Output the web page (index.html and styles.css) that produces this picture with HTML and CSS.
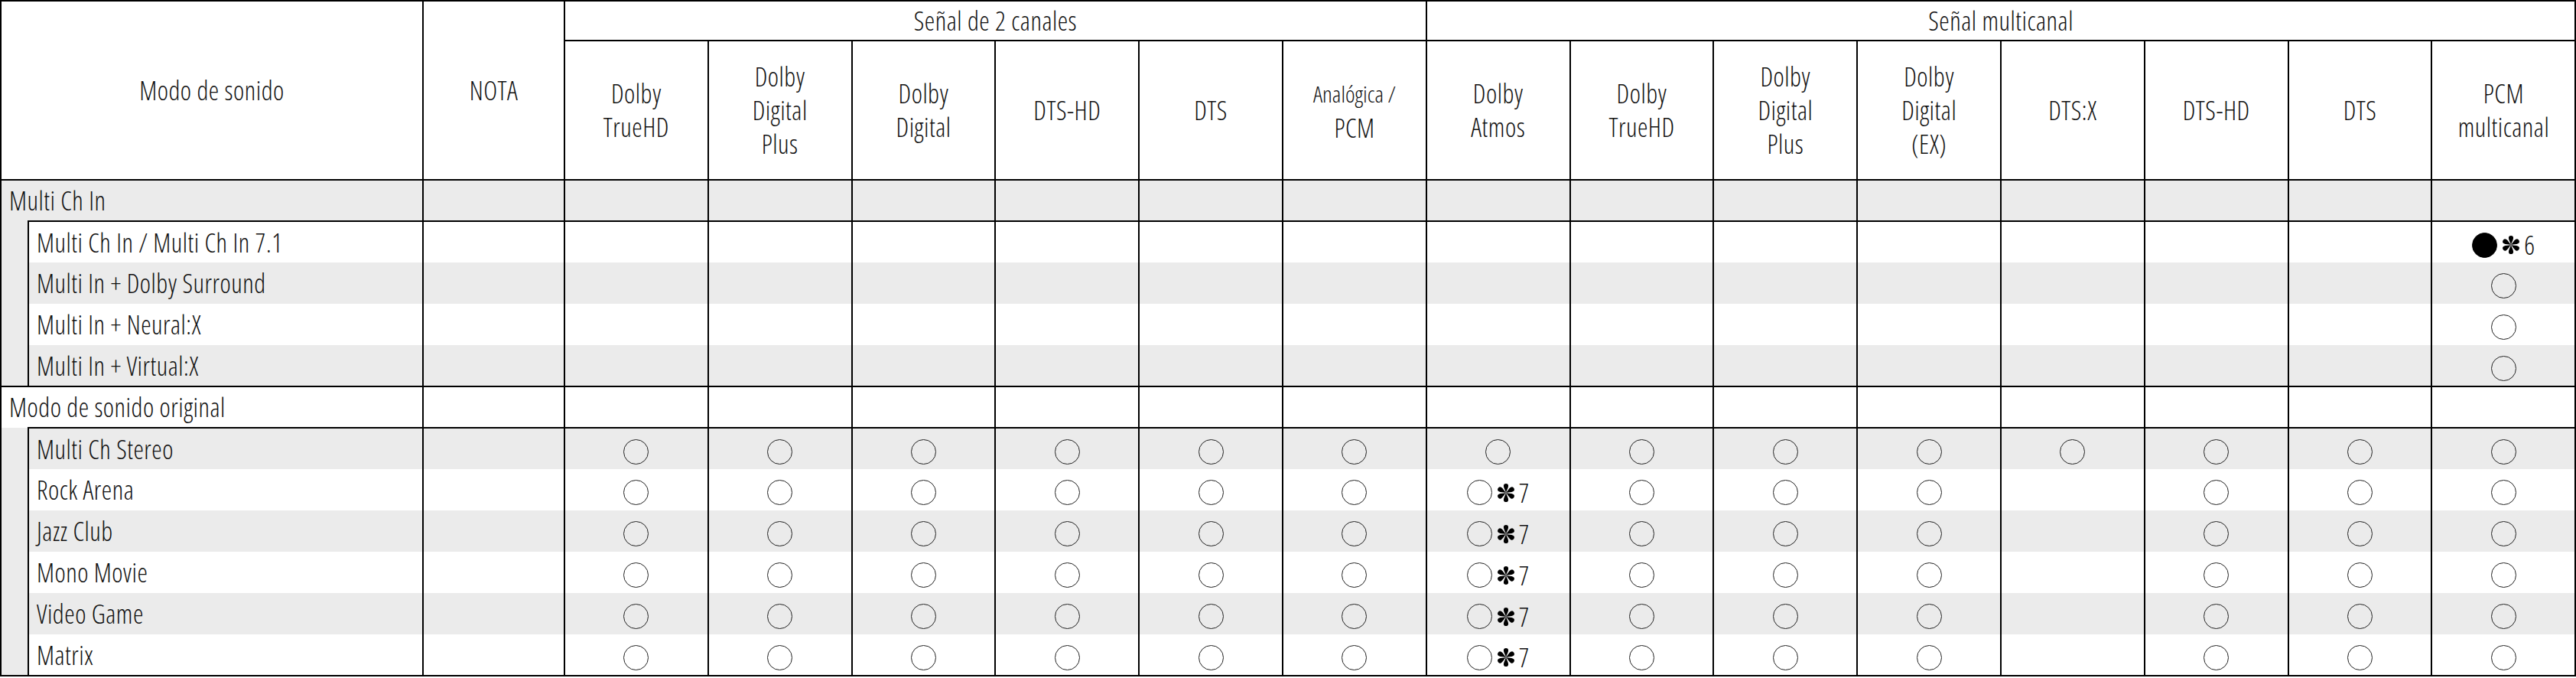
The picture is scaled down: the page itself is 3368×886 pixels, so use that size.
FILE: index.html
```html
<!DOCTYPE html>
<html lang="es">
<head>
<meta charset="utf-8">
<title>Modo de sonido</title>
<link rel="stylesheet" href="styles.css">
</head>
<body>
<svg class="defs" width="0" height="0" aria-hidden="true">
  <symbol id="ast" viewBox="-12 -12 24 24">
    <g fill="#000">
      <path id="spoke" d="M0 0 C-0.8 -3 -3.1 -6.4 -3.1 -8.9 A3.1 3.1 0 0 1 3.1 -8.9 C3.1 -6.4 0.8 -3 0 0Z"/>
      <use href="#spoke" transform="rotate(60)"/>
      <use href="#spoke" transform="rotate(120)"/>
      <use href="#spoke" transform="rotate(180)"/>
      <use href="#spoke" transform="rotate(240)"/>
      <use href="#spoke" transform="rotate(300)"/>
    </g>
  </symbol>
</svg>
<table class="modes">
  <colgroup>
    <col class="c-gutter"><col class="c-label"><col class="c-nota">
    <col class="c-sig"><col class="c-sig"><col class="c-sig"><col class="c-sig"><col class="c-sig"><col class="c-sig"><col class="c-sig">
    <col class="c-sig"><col class="c-sig"><col class="c-sig"><col class="c-sig"><col class="c-sig"><col class="c-sig"><col class="c-sig">
  </colgroup>
  <thead>
    <tr class="h1">
      <th colspan="2" rowspan="2">Modo de sonido</th>
      <th rowspan="2">NOTA</th>
      <th colspan="6">Señal de 2 canales</th>
      <th colspan="8">Señal multicanal</th>
    </tr>
    <tr class="h2">
      <th>Dolby<br>TrueHD</th>
      <th>Dolby<br>Digital<br>Plus</th>
      <th>Dolby<br>Digital</th>
      <th>DTS-HD</th>
      <th>DTS</th>
      <th><span class="squeeze">Analógica /</span><br>PCM</th>
      <th>Dolby<br>Atmos</th>
      <th>Dolby<br>TrueHD</th>
      <th>Dolby<br>Digital<br>Plus</th>
      <th>Dolby<br>Digital<br>(EX)</th>
      <th>DTS:X</th>
      <th>DTS-HD</th>
      <th>DTS</th>
      <th>PCM<br>multicanal</th>
    </tr>
  </thead>
  <tbody class="grp grp-grey">
    <tr class="group grey">
      <td colspan="2" class="glabel">Multi Ch In</td>
      <td></td><td></td><td></td><td></td><td></td><td></td><td></td><td></td><td></td><td></td><td></td><td></td><td></td><td></td><td></td>
    </tr>
    <tr class="sub first">
      <td class="gutter" rowspan="4"></td>
      <td class="slabel">Multi Ch In / Multi Ch In 7.1</td>
      <td></td><td></td><td></td><td></td><td></td><td></td><td></td><td></td><td></td><td></td><td></td><td></td><td></td><td></td>
      <td><span class="mark"><span class="dot"></span><svg class="star"><use href="#ast"/></svg><span class="num">6</span></span></td>
    </tr>
    <tr class="sub grey">
      <td class="slabel">Multi In + Dolby Surround</td>
      <td></td><td></td><td></td><td></td><td></td><td></td><td></td><td></td><td></td><td></td><td></td><td></td><td></td><td></td>
      <td><span class="ring"></span></td>
    </tr>
    <tr class="sub">
      <td class="slabel">Multi In + Neural:X</td>
      <td></td><td></td><td></td><td></td><td></td><td></td><td></td><td></td><td></td><td></td><td></td><td></td><td></td><td></td>
      <td><span class="ring"></span></td>
    </tr>
    <tr class="sub grey">
      <td class="slabel">Multi In + Virtual:X</td>
      <td></td><td></td><td></td><td></td><td></td><td></td><td></td><td></td><td></td><td></td><td></td><td></td><td></td><td></td>
      <td><span class="ring"></span></td>
    </tr>
  </tbody>
  <tbody class="grp">
    <tr class="group">
      <td colspan="2" class="glabel">Modo de sonido original</td>
      <td></td><td></td><td></td><td></td><td></td><td></td><td></td><td></td><td></td><td></td><td></td><td></td><td></td><td></td><td></td>
    </tr>
    <tr class="sub first grey">
      <td class="gutter" rowspan="6"></td>
      <td class="slabel">Multi Ch Stereo</td>
      <td></td>
      <td><span class="ring"></span></td><td><span class="ring"></span></td><td><span class="ring"></span></td><td><span class="ring"></span></td><td><span class="ring"></span></td><td><span class="ring"></span></td>
      <td><span class="ring"></span></td><td><span class="ring"></span></td><td><span class="ring"></span></td><td><span class="ring"></span></td><td><span class="ring"></span></td><td><span class="ring"></span></td><td><span class="ring"></span></td><td><span class="ring"></span></td>
    </tr>
    <tr class="sub">
      <td class="slabel">Rock Arena</td>
      <td></td>
      <td><span class="ring"></span></td><td><span class="ring"></span></td><td><span class="ring"></span></td><td><span class="ring"></span></td><td><span class="ring"></span></td><td><span class="ring"></span></td>
      <td><span class="mark"><span class="ring"></span><svg class="star"><use href="#ast"/></svg><span class="num">7</span></span></td>
      <td><span class="ring"></span></td><td><span class="ring"></span></td><td><span class="ring"></span></td><td></td><td><span class="ring"></span></td><td><span class="ring"></span></td><td><span class="ring"></span></td>
    </tr>
    <tr class="sub grey">
      <td class="slabel">Jazz Club</td>
      <td></td>
      <td><span class="ring"></span></td><td><span class="ring"></span></td><td><span class="ring"></span></td><td><span class="ring"></span></td><td><span class="ring"></span></td><td><span class="ring"></span></td>
      <td><span class="mark"><span class="ring"></span><svg class="star"><use href="#ast"/></svg><span class="num">7</span></span></td>
      <td><span class="ring"></span></td><td><span class="ring"></span></td><td><span class="ring"></span></td><td></td><td><span class="ring"></span></td><td><span class="ring"></span></td><td><span class="ring"></span></td>
    </tr>
    <tr class="sub">
      <td class="slabel">Mono Movie</td>
      <td></td>
      <td><span class="ring"></span></td><td><span class="ring"></span></td><td><span class="ring"></span></td><td><span class="ring"></span></td><td><span class="ring"></span></td><td><span class="ring"></span></td>
      <td><span class="mark"><span class="ring"></span><svg class="star"><use href="#ast"/></svg><span class="num">7</span></span></td>
      <td><span class="ring"></span></td><td><span class="ring"></span></td><td><span class="ring"></span></td><td></td><td><span class="ring"></span></td><td><span class="ring"></span></td><td><span class="ring"></span></td>
    </tr>
    <tr class="sub grey">
      <td class="slabel">Video Game</td>
      <td></td>
      <td><span class="ring"></span></td><td><span class="ring"></span></td><td><span class="ring"></span></td><td><span class="ring"></span></td><td><span class="ring"></span></td><td><span class="ring"></span></td>
      <td><span class="mark"><span class="ring"></span><svg class="star"><use href="#ast"/></svg><span class="num">7</span></span></td>
      <td><span class="ring"></span></td><td><span class="ring"></span></td><td><span class="ring"></span></td><td></td><td><span class="ring"></span></td><td><span class="ring"></span></td><td><span class="ring"></span></td>
    </tr>
    <tr class="sub last">
      <td class="slabel">Matrix</td>
      <td></td>
      <td><span class="ring"></span></td><td><span class="ring"></span></td><td><span class="ring"></span></td><td><span class="ring"></span></td><td><span class="ring"></span></td><td><span class="ring"></span></td>
      <td><span class="mark"><span class="ring"></span><svg class="star"><use href="#ast"/></svg><span class="num">7</span></span></td>
      <td><span class="ring"></span></td><td><span class="ring"></span></td><td><span class="ring"></span></td><td></td><td><span class="ring"></span></td><td><span class="ring"></span></td><td><span class="ring"></span></td>
    </tr>
  </tbody>
</table>
</body>
</html>
```

FILE: styles.css
```css
html, body {
  margin: 0;
  padding: 0;
  background: #fff;
}

body {
  font-family: "Open Sans", "Liberation Sans", sans-serif;
  font-stretch: 75%;
  font-weight: 350;
  color: #111;
}

.defs {
  position: absolute;
  width: 0;
  height: 0;
  overflow: hidden;
}

.modes {
  border-collapse: collapse;
  table-layout: fixed;
  width: 3367px;
  font-size: 34px;
  letter-spacing: 0.5px;
}

.c-gutter { width: 36px; }
.c-label { width: 516px; }
.c-nota { width: 185px; }
.c-sig { width: 187.8px; }

.modes th,
.modes td {
  border-left: 2px solid #000;
  border-right: 2px solid #000;
  border-top: none;
  border-bottom: none;
  padding: 0;
  text-align: center;
  vertical-align: middle;
  font-weight: 350;
  white-space: nowrap;
}

.modes thead th {
  border: 2px solid #000;
  line-height: 44px;
}

.h1 th { height: 50px; }
.h2 th { height: 180px; }

.squeeze {
  font-size: 30px;
  letter-spacing: 0;
}

.modes tbody tr { height: 54px; }

.modes tr.grey td { background: #ebebeb; }
.grp-grey .gutter { background: #ebebeb; }

.modes tr.group td { border-top: 2px solid #000; }
.modes tr.first td { border-top: 2px solid #000; }
.modes tr.first td.gutter { border-top: none; }
.modes tr.last td,
.modes tr.last td.gutter { border-bottom: 2px solid #000; }
.modes .gutter { border-bottom: 2px solid #000; }

.glabel {
  text-align: left !important;
  padding-left: 10px !important;
}

.slabel {
  text-align: left !important;
  padding-left: 10px !important;
}

.ring,
.dot {
  display: inline-block;
  width: 33px;
  height: 33px;
  box-sizing: border-box;
  border: 1.5px solid #222;
  border-radius: 50%;
  vertical-align: middle;
}

.dot {
  background: #000;
  border-color: #000;
}

.mark {
  display: inline-flex;
  align-items: center;
  vertical-align: middle;
}

.star {
  width: 24px;
  height: 24px;
  margin-left: 6px;
  margin-right: 5px;
}

.num {
  font-size: 34px;
  line-height: 1;
}
```
